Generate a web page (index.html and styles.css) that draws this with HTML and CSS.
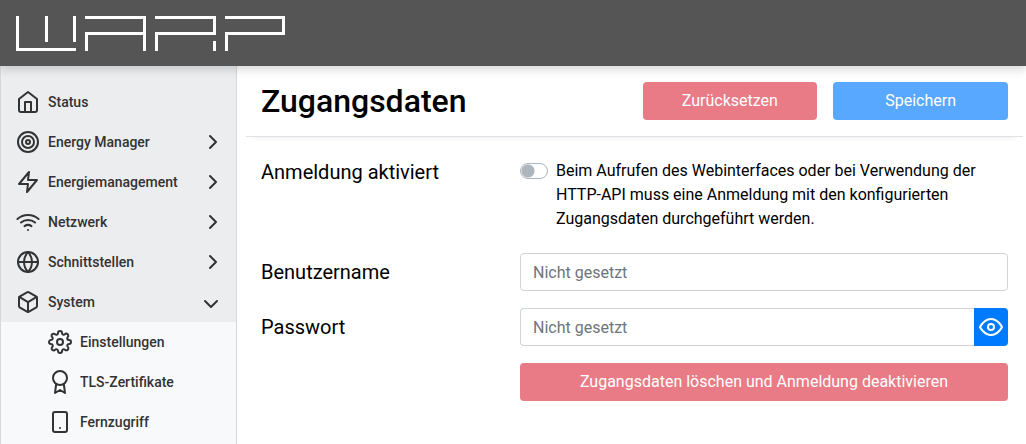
FILE: index.html
```html
<!DOCTYPE html>
<html lang="de">
<head>
<meta charset="utf-8">
<meta name="viewport" content="width=device-width, initial-scale=1">
<title>Zugangsdaten</title>
<link rel="stylesheet" href="styles.css">
</head>
<body>
<header class="topbar">
  <svg class="logo" width="270" height="36" viewBox="16 16 270 36" role="img" aria-label="WARP">
    <path d="M16 16h3v32h57v3H16zM45 16h3v26h-3zM73 16h3v26h-3z"/>
    <path d="M85 16h61v35h-3V35H88v16h-3V32h58V19H85z"/>
    <path d="M155 16h61v19h-58v16h-3V32h58V19h-58zM213 41h3v10h-3z"/>
    <path d="M225 16h60v19h-57v16h-3V32h57V19h-57z"/>
  </svg>
</header>
<div class="page">
  <nav class="sidebar">
    <a class="nav-link" href="#status">
      <svg class="icon" viewBox="0 0 24 24"><path d="M3 9l9-7 9 7v11a2 2 0 0 1-2 2H5a2 2 0 0 1-2-2z"/><path d="M9 22V12h6v10"/></svg>
      <span>Status</span>
    </a>
    <a class="nav-link" href="#energy-manager">
      <svg class="icon" viewBox="0 0 24 24"><circle cx="12" cy="12" r="10"/><circle cx="12" cy="12" r="6"/><circle cx="12" cy="12" r="2"/></svg>
      <span>Energy Manager</span>
      <svg class="icon chevron" viewBox="0 0 24 24"><path d="M9 18l6-6-6-6"/></svg>
    </a>
    <a class="nav-link" href="#energiemanagement">
      <svg class="icon" viewBox="0 0 24 24"><path d="M13 2L3 14h9l-1 8 10-12h-9l1-8z"/></svg>
      <span>Energiemanagement</span>
      <svg class="icon chevron" viewBox="0 0 24 24"><path d="M9 18l6-6-6-6"/></svg>
    </a>
    <a class="nav-link" href="#netzwerk">
      <svg class="icon" viewBox="0 0 24 24"><path d="M5 12.55a11 11 0 0 1 14.08 0"/><path d="M1.42 9a16 16 0 0 1 21.16 0"/><path d="M8.53 16.11a6 6 0 0 1 6.95 0"/><path d="M12 20h.01"/></svg>
      <span>Netzwerk</span>
      <svg class="icon chevron" viewBox="0 0 24 24"><path d="M9 18l6-6-6-6"/></svg>
    </a>
    <a class="nav-link" href="#schnittstellen">
      <svg class="icon" viewBox="0 0 24 24"><circle cx="12" cy="12" r="10"/><path d="M2 12h20"/><path d="M12 2a15.3 15.3 0 0 1 4 10 15.3 15.3 0 0 1-4 10 15.3 15.3 0 0 1-4-10 15.3 15.3 0 0 1 4-10z"/></svg>
      <span>Schnittstellen</span>
      <svg class="icon chevron" viewBox="0 0 24 24"><path d="M9 18l6-6-6-6"/></svg>
    </a>
    <a class="nav-link" href="#system">
      <svg class="icon" viewBox="0 0 24 24"><path d="M21 16V8a2 2 0 0 0-1-1.73l-7-4a2 2 0 0 0-2 0l-7 4A2 2 0 0 0 3 8v8a2 2 0 0 0 1 1.73l7 4a2 2 0 0 0 2 0l7-4A2 2 0 0 0 21 16z"/><path d="M3.27 6.96L12 12.01l8.73-5.05"/><path d="M12 22.08V12"/></svg>
      <span>System</span>
      <svg class="icon chevron" viewBox="0 0 24 24"><path d="M4 11l6 6 6-6"/></svg>
    </a>
    <div class="subnav">
      <a class="nav-link" href="#einstellungen">
        <svg class="icon" viewBox="0 0 24 24"><circle cx="12" cy="12" r="3"/><path d="M19.4 15a1.65 1.65 0 0 0 .33 1.82l.06.06a2 2 0 0 1 0 2.83 2 2 0 0 1-2.83 0l-.06-.06a1.65 1.65 0 0 0-1.82-.33 1.65 1.65 0 0 0-1 1.51V21a2 2 0 0 1-2 2 2 2 0 0 1-2-2v-.09A1.65 1.65 0 0 0 9 19.4a1.65 1.65 0 0 0-1.82.33l-.06.06a2 2 0 0 1-2.83 0 2 2 0 0 1 0-2.83l.06-.06a1.65 1.65 0 0 0 .33-1.82 1.65 1.65 0 0 0-1.51-1H3a2 2 0 0 1-2-2 2 2 0 0 1 2-2h.09A1.65 1.65 0 0 0 4.6 9a1.65 1.65 0 0 0-.33-1.82l-.06-.06a2 2 0 0 1 0-2.83 2 2 0 0 1 2.83 0l.06.06a1.65 1.65 0 0 0 1.82.33H9a1.65 1.65 0 0 0 1-1.51V3a2 2 0 0 1 2-2 2 2 0 0 1 2 2v.09a1.65 1.65 0 0 0 1 1.51 1.65 1.65 0 0 0 1.82-.33l.06-.06a2 2 0 0 1 2.83 0 2 2 0 0 1 0 2.83l-.06.06a1.65 1.65 0 0 0-.33 1.82V9a1.65 1.65 0 0 0 1.51 1H21a2 2 0 0 1 2 2 2 2 0 0 1-2 2h-.09a1.65 1.65 0 0 0-1.51 1z"/></svg>
        <span>Einstellungen</span>
      </a>
      <a class="nav-link" href="#zertifikate">
        <svg class="icon" viewBox="0 0 24 24"><circle cx="12" cy="8" r="7"/><path d="M8.21 13.89L7 23l5-3 5 3-1.21-9.12"/></svg>
        <span>TLS-Zertifikate</span>
      </a>
      <a class="nav-link" href="#fernzugriff">
        <svg class="icon" viewBox="0 0 24 24"><rect x="5" y="2" width="14" height="20" rx="2"/><path d="M12 18h.01"/></svg>
        <span>Fernzugriff</span>
      </a>
    </div>
  </nav>
  <main class="content">
    <div class="page-header">
      <h1 class="title">Zugangsdaten</h1>
      <div class="actions">
        <button class="btn btn-danger" type="button" disabled>Zurücksetzen</button>
        <button class="btn btn-primary" type="submit" form="credentials" disabled>Speichern</button>
      </div>
    </div>
    <form class="form" id="credentials">
      <div class="row">
        <label class="label" for="enabled">Anmeldung aktiviert</label>
        <div class="control switch">
          <input class="switch-input" type="checkbox" id="enabled">
          <label for="enabled">Beim Aufrufen des Webinterfaces oder bei Verwendung der HTTP-API muss eine Anmeldung mit den konfigurierten Zugangsdaten durchgeführt werden.</label>
        </div>
      </div>
      <div class="row">
        <label class="label" for="username">Benutzername</label>
        <div class="control"><input class="field" type="text" id="username" placeholder="Nicht gesetzt" autocomplete="username"></div>
      </div>
      <div class="row">
        <label class="label" for="password">Passwort</label>
        <div class="control input-group">
          <input class="field" type="password" id="password" placeholder="Nicht gesetzt" autocomplete="new-password">
          <button class="reveal" type="button" aria-label="Passwort anzeigen">
            <svg class="icon" viewBox="0 0 24 24"><path d="M1 12s4-8 11-8 11 8 11 8-4 8-11 8-11-8-11-8z"/><circle cx="12" cy="12" r="3"/></svg>
          </button>
        </div>
      </div>
      <div class="row">
        <div class="control control-offset"><button class="btn btn-danger" type="button" disabled>Zugangsdaten löschen und Anmeldung deaktivieren</button></div>
      </div>
    </form>
  </main>
</div>
</body>
</html>
```

FILE: styles.css
```css
* {
  box-sizing: border-box;
}

body {
  display: flex;
  flex-direction: column;
  min-height: 100vh;
  margin: 0;
  background: #fff;
  color: #000;
  font: 16px/24px Roboto, "Liberation Sans", sans-serif;
}

.topbar {
  z-index: 1;
  padding: 16px 16px 14px;
  background: #555;
  box-shadow: 0 4px 8px rgba(0, 0, 0, 0.15);
}

.logo {
  display: block;
  fill: #fff;
}

.page {
  display: flex;
  flex: 1;
}

.sidebar {
  display: flex;
  flex: none;
  flex-direction: column;
  width: 237px;
  padding-top: 16px;
  border: solid #d6d8da;
  border-width: 0 1px;
  background: #ecedef;
}

.nav-link {
  display: flex;
  align-items: center;
  gap: 8px;
  height: 40px;
  padding: 0 11px 0 15px;
  color: #333;
  font-size: 14px;
  font-weight: 500;
  text-decoration: none;
}

.subnav {
  flex: 1;
  background: #f8f9fa;
}

.subnav .nav-link {
  padding-left: 47px;
}

.icon {
  display: block;
  flex: none;
  width: 24px;
  height: 24px;
  fill: none;
  stroke: currentColor;
  stroke-width: 2;
  stroke-linecap: round;
  stroke-linejoin: round;
}

.chevron {
  margin-left: auto;
}

.content {
  flex: 1;
  min-width: 0;
  padding: 0 3px 24px 9px;
}

.page-header {
  display: grid;
  grid-template-columns: 1fr 1fr;
  align-items: center;
  padding: 16px 0;
  border-bottom: 1px solid #dee2e6;
  box-shadow: 0 8px 6px -8px rgba(0, 0, 0, 0.1);
}

.title {
  margin: 0;
  padding-left: 15px;
  font-size: 32px;
  font-weight: 500;
  line-height: 38px;
}

.actions {
  display: grid;
  grid-template-columns: 1fr 1fr;
  gap: 16px;
  padding: 0 15px 0 8px;
}

.btn {
  width: 100%;
  height: 38px;
  padding: 0 12px;
  border: 0;
  border-radius: 4px;
  color: #fff;
  font: inherit;
}

.btn:disabled {
  opacity: 0.65;
}

.btn-danger {
  background: #dc3545;
}

.btn-primary {
  background: #007bff;
}

.form {
  display: grid;
  gap: 17px;
  padding-top: 16px;
}

.row {
  display: grid;
  grid-template-columns: 1fr 2fr;
  align-items: start;
}

.label {
  padding: 4px 15px;
  font-size: 20px;
  line-height: 30px;
}

.control {
  display: flex;
  padding: 0 15px;
}

.control-offset {
  grid-column: 2;
}

.switch {
  gap: 8px;
  padding: 6px 15px 5px;
}

.switch-input {
  flex: none;
  width: 28px;
  height: 16px;
  margin: 4px 0;
  border: 1px solid #adb5bd;
  border-radius: 8px;
  appearance: none;
  background: radial-gradient(circle at 7px 7px, #adb5bd 6px, #fff 7px);
}

.switch-input:checked {
  background: radial-gradient(circle at 19px 7px, #fff 6px, #007bff 7px);
}

.field {
  flex: 1;
  min-width: 0;
  height: 38px;
  padding: 0 12px;
  border: 1px solid #ced4da;
  border-radius: 4px;
  background: #fff;
  color: #495057;
  font: inherit;
}

.field::placeholder {
  color: #6c757d;
  opacity: 1;
}

.input-group .field {
  border-right: 0;
  border-radius: 4px 0 0 4px;
}

.reveal {
  height: 38px;
  padding: 0 5px;
  border: 0;
  border-radius: 0 4px 4px 0;
  background: #007bff;
  color: #fff;
}
```
